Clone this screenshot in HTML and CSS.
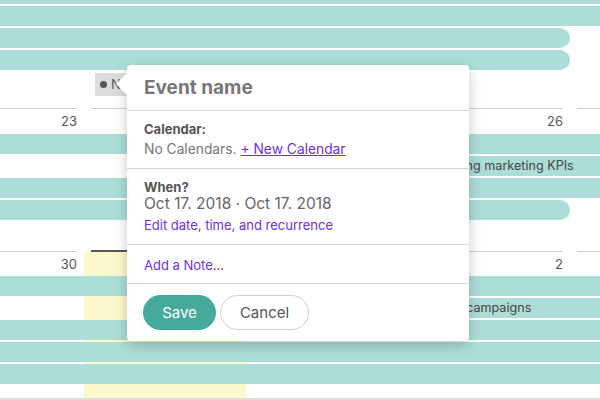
FILE: index.html
```html
<!DOCTYPE html>
<html>
<head>
<meta charset="utf-8">
<link rel="stylesheet" href="styles.css">
</head>
<body>
<div class="cal">
  <div class="week w0">
    <div class="bar all"></div>
    <div class="bar all"></div>
    <div class="bar to4"></div>
    <div class="bar to4"></div>
    <div class="chip"><span class="dot"></span><span class="chip-text">New event</span></div>
  </div>
  <div class="week w1">
    <div class="day">23</div>
    <div class="day">24</div>
    <div class="day">25</div>
    <div class="day">26</div>
    <div class="day"></div>
    <div class="bar all"></div>
    <div class="bar from4">Reviewing marketing KPIs</div>
    <div class="bar all"></div>
    <div class="bar to4"></div>
  </div>
  <div class="week w2">
    <div class="day">30</div>
    <div class="day today">31</div>
    <div class="day">1</div>
    <div class="day">2</div>
    <div class="day"></div>
    <div class="bar all"></div>
    <div class="bar from4">Review campaigns</div>
    <div class="bar all"></div>
    <div class="bar all"></div>
    <div class="bar all"></div>
  </div>
  <div class="endline"></div>
</div>

<div class="popup">
  <div class="head">Event name</div>
  <div class="sec s-cal">
    <div class="label">Calendar:</div>
    <div class="text">No Calendars. <a class="link u">+ New Calendar</a></div>
  </div>
  <div class="sec s-when">
    <div class="label">When?</div>
    <div class="date">Oct 17. 2018 · Oct 17. 2018</div>
    <div class="link edit">Edit date, time, and recurrence</div>
  </div>
  <div class="sec s-note">
    <div class="link">Add a Note...</div>
  </div>
  <div class="actions">
    <button class="btn save">Save</button>
    <button class="btn cancel">Cancel</button>
  </div>
</div>
</body>
</html>
```
FILE: styles.css
```css
html, body {
  margin: 0;
  padding: 0;
}
body {
  width: 600px;
  height: 400px;
  overflow: hidden;
  position: relative;
  background: #fff;
  font-family: Inter, Roboto, "Liberation Sans", sans-serif;
}
.cal {
  margin-left: -78px;
  width: 810px;
}
.week {
  display: grid;
  grid-template-columns: repeat(5, 162px);
  grid-auto-rows: 20px;
  row-gap: 2px;
  box-sizing: border-box;
}
.w0 {
  margin-top: -16px;
  height: 124px;
}
.w1 {
  height: 143px;
  grid-template-rows: 24px;
}
.w2 {
  height: 147px;
  grid-template-rows: 23px;
  background: linear-gradient(to right, transparent 162px, #fdf9cc 162px, #fdf9cc 324px, transparent 324px);
}
.day {
  margin: 0 7px;
  border-top: 1px solid #cfcfcf;
  text-align: right;
  font-size: 13px;
  line-height: 25px;
  color: #555;
}
.day.today {
  border-top: 2px solid #555;
  margin-top: -1px;
}
.bar {
  background: #acded7;
  font-size: 12.6px;
  line-height: 20px;
  padding-left: 12px;
  color: #444;
  white-space: nowrap;
  overflow: hidden;
}
.all { grid-column: 1 / -1; }
.to4 { grid-column: 1 / 5; border-radius: 0 10px 10px 0; }
.from4 { grid-column: 4 / -1; }
.chip {
  grid-column: 2;
  justify-self: start;
  margin: 1px 0 0 11px;
  width: 32px;
  box-sizing: border-box;
  height: 23px;
  padding-left: 5px;
  background: #dcdcdc;
  font-size: 13px;
  line-height: 23px;
  color: #555;
  display: flex;
  align-items: center;
  gap: 4px;
  white-space: nowrap;
  overflow: hidden;
}
.dot {
  flex: none;
  width: 7px;
  height: 7px;
  border-radius: 50%;
  background: #555;
}
.endline {
  height: 2px;
  background: #dcdcdc;
  width: 600px;
  margin-left: 78px;
}
.popup {
  position: absolute;
  left: 127px;
  top: 65px;
  width: 342px;
  background: #fff;
  border-radius: 4px;
  box-shadow: 0 4px 14px rgba(0, 0, 0, 0.22);
  z-index: 5;
}
.popup::before {
  content: "";
  position: absolute;
  left: -11px;
  top: 8px;
  border-right: 11px solid #fff;
  border-top: 11px solid transparent;
  border-bottom: 11px solid transparent;
}
.head {
  height: 45px;
  line-height: 45px;
  padding: 0 17px;
  font-size: 19px;
  font-weight: 700;
  color: #777;
  border-bottom: 1px solid #d6d6d6;
}
.sec {
  padding: 0 17px;
  border-bottom: 1px solid #d6d6d6;
}
.label {
  font-size: 13px;
  font-weight: 700;
  color: #555;
}
.s-cal { padding-top: 8px; padding-bottom: 8px; }
.s-cal .label { line-height: 20px; }
.s-cal .text { line-height: 21px; font-size: 13.8px; color: #777; }
.link {
  color: #6b2ff0;
  font-size: 13px;
}
.u {
  font-size: 13.8px;
  text-decoration: underline;
}
.s-when { padding-top: 9px; padding-bottom: 6px; }
.s-when .label { line-height: 18px; }
.date { font-size: 15.5px; line-height: 16px; color: #666; }
.edit { line-height: 26px; }
.s-note { padding-top: 10px; padding-bottom: 8px; }
.s-note .link { line-height: 20px; }
.actions {
  display: flex;
  gap: 4px;
  padding: 11px 16px;
}
.btn {
  height: 35px;
  border-radius: 18px;
  font-family: inherit;
  font-size: 15px;
  padding: 0;
}
.save {
  width: 73px;
  background: #45a99b;
  color: #fff;
  border: none;
}
.cancel {
  width: 89px;
  background: #fff;
  color: #555;
  border: 1px solid #cfcfcf;
}
```
